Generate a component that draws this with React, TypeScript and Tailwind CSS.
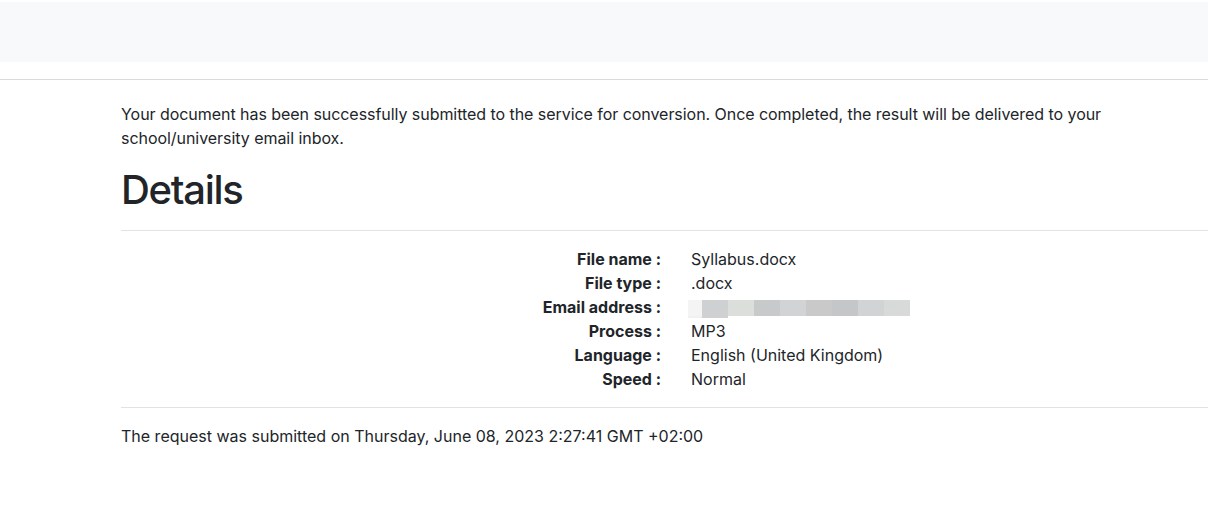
import React from "react";

const rows: [string, string | null][] = [
  ["File name :", "Syllabus.docx"],
  ["File type :", ".docx"],
  ["Email address :", null],
  ["Process :", "MP3"],
  ["Language :", "English (United Kingdom)"],
  ["Speed :", "Normal"],
];

function Blur() {
  return (
    <div className="flex flex-col pt-[5px]">
      <div className="flex h-[16px]">
        <div className="w-[14px] bg-[#f4f4f4]" />
        <div className="w-[26px] bg-[#cfd0d2]" />
        <div className="w-[26px] bg-[#dcdedc]" />
        <div className="w-[26px] bg-[#c8c9cb]" />
        <div className="w-[26px] bg-[#d2d3d5]" />
        <div className="w-[26px] bg-[#c9c9c9]" />
        <div className="w-[26px] bg-[#c5c6c8]" />
        <div className="w-[26px] bg-[#d2d3d5]" />
        <div className="w-[26px] bg-[#d8dad9]" />
      </div>
      <div className="flex h-[2px]">
        <div className="w-[14px] bg-[#f0f0f0]" />
        <div className="w-[26px] bg-[#d0d0d0]" />
      </div>
    </div>
  );
}

export default function App() {
  return (
    <div
      className="w-[1208px] min-h-[524px] overflow-hidden bg-white text-[#212529] text-[16px] leading-[24px]"
      style={{ fontFamily: "Inter, 'Noto Sans', sans-serif" }}
    >
      <div className="pt-[2px]">
        <div className="h-[60px] bg-[#f8f9fa]" />
      </div>
      <div className="h-[17px]" />
      <div className="h-px bg-[#dadada]" />
      <div className="pl-[121px]">
        <div className="w-[1110px] pt-[22px]">
          <p className="mb-[16px] tracking-[-0.05px]">
            Your document has been successfully submitted to the service for conversion. Once completed, the result will be delivered to your school/university email inbox.
          </p>
          <h2 className="text-[40px] leading-[48px] font-medium tracking-[-1.3px]">Details</h2>
          <div className="mt-[16px] h-px bg-[#e2e2e2]" />
          <div className="py-[16px]">
            {rows.map(([label, value]) => (
              <div key={label} className="grid grid-cols-2 h-[24px]">
                <div className="px-[15px] text-right font-bold">{label}</div>
                <div className="px-[15px]">
                  {value === null ? <div className="-ml-[3px]"><Blur /></div> : value}
                </div>
              </div>
            ))}
          </div>
          <div className="h-px bg-[#e2e2e2]" />
          <p className="mt-[16px]">
            The request was submitted on Thursday, June 08, 2023 2:27:41 GMT +02:00
          </p>
        </div>
      </div>
    </div>
  );
}
